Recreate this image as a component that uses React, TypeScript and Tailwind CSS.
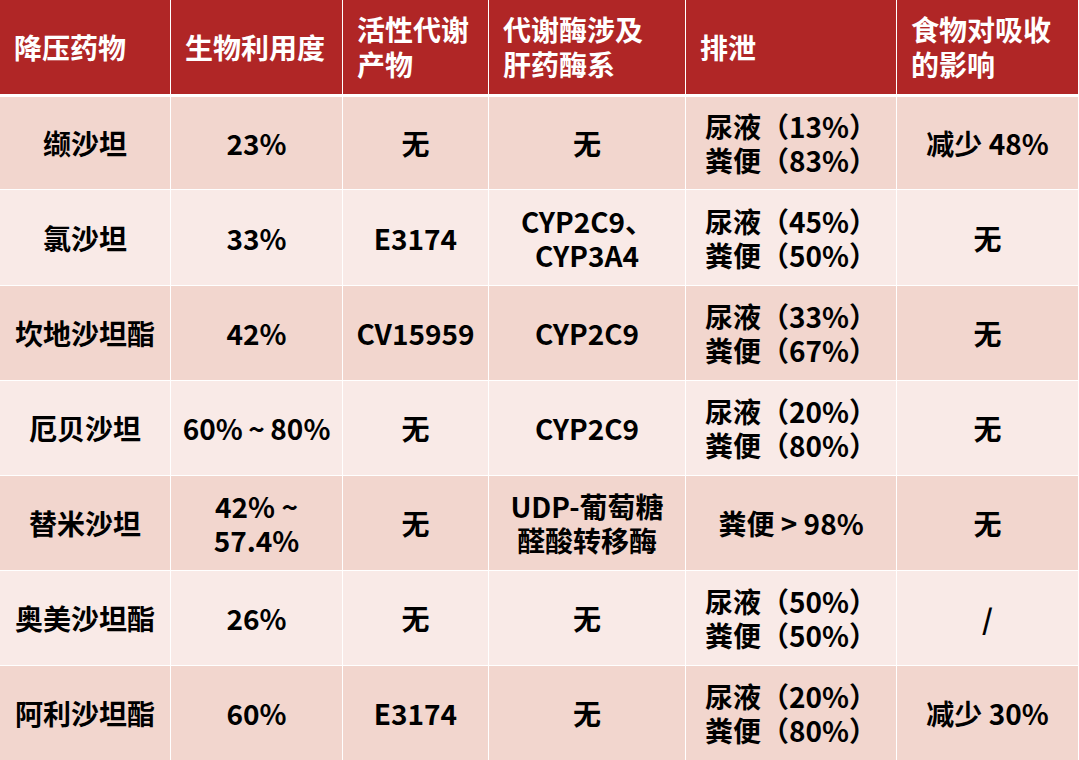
import { ReactNode } from "react";

const headers: ReactNode[] = [
  "降压药物",
  "生物利用度",
  <>活性代谢<br />产物</>,
  <>代谢酶涉及<br />肝药酶系</>,
  "排泄",
  <>食物对吸收<br />的影响</>,
];

const rows: { h: string; cells: ReactNode[] }[] = [
  {
    h: "h-[92px]",
    cells: ["缬沙坦", "23%", "无", "无", <>尿液（13%）<br />粪便（83%）</>, "减少 48%"],
  },
  {
    h: "h-[95px]",
    cells: ["氯沙坦", "33%", "E3174", <>CYP2C9、<br />CYP3A4</>, <>尿液（45%）<br />粪便（50%）</>, "无"],
  },
  {
    h: "h-[94px]",
    cells: ["坎地沙坦酯", "42%", "CV15959", "CYP2C9", <>尿液（33%）<br />粪便（67%）</>, "无"],
  },
  {
    h: "h-[94px]",
    cells: ["厄贝沙坦", "60%\u2009~\u200980%", "无", "CYP2C9", <>尿液（20%）<br />粪便（80%）</>, "无"],
  },
  {
    h: "h-[94px]",
    cells: ["替米沙坦", <>42% ~<br />57.4%</>, "无", <>UDP-葡萄糖<br />醛酸转移酶</>, "粪便 > 98%", "无"],
  },
  {
    h: "h-[94px]",
    cells: ["奥美沙坦酯", "26%", "无", "无", <>尿液（50%）<br />粪便（50%）</>, "/"],
  },
  {
    h: "h-[94px]",
    cells: ["阿利沙坦酯", "60%", "E3174", "无", <>尿液（20%）<br />粪便（80%）</>, "减少 30%"],
  },
];

const cols = "grid grid-cols-[170px_171px_145px_196px_210px_181px] gap-px";

export default function App() {
  return (
    <div
      className="w-[1079px] h-[760px] bg-white pr-px overflow-hidden"
      style={{ fontFamily: '"Noto Sans CJK SC", "Noto Sans", sans-serif' }}
    >
      <div className={cols}>
        {headers.map((t, i) => (
          <div
            key={i}
            className="h-[94px] bg-[#b02626] text-white font-bold text-[28px] leading-[35px] pl-[14px] flex items-center whitespace-nowrap"
          >
            <div>{t}</div>
          </div>
        ))}
      </div>
      <div className="mt-[3px] flex flex-col gap-px">
        {rows.map((r, ri) => (
          <div key={ri} className={cols}>
            {r.cells.map((c, ci) => (
              <div
                key={ci}
                className={`${r.h} ${ri % 2 === 0 ? "bg-[#f2d6ce]" : "bg-[#f9eae7]"} text-black font-bold text-[28px] leading-[34px] flex items-center justify-center text-center whitespace-nowrap`}
              >
                <div>{c}</div>
              </div>
            ))}
          </div>
        ))}
      </div>
    </div>
  );
}
